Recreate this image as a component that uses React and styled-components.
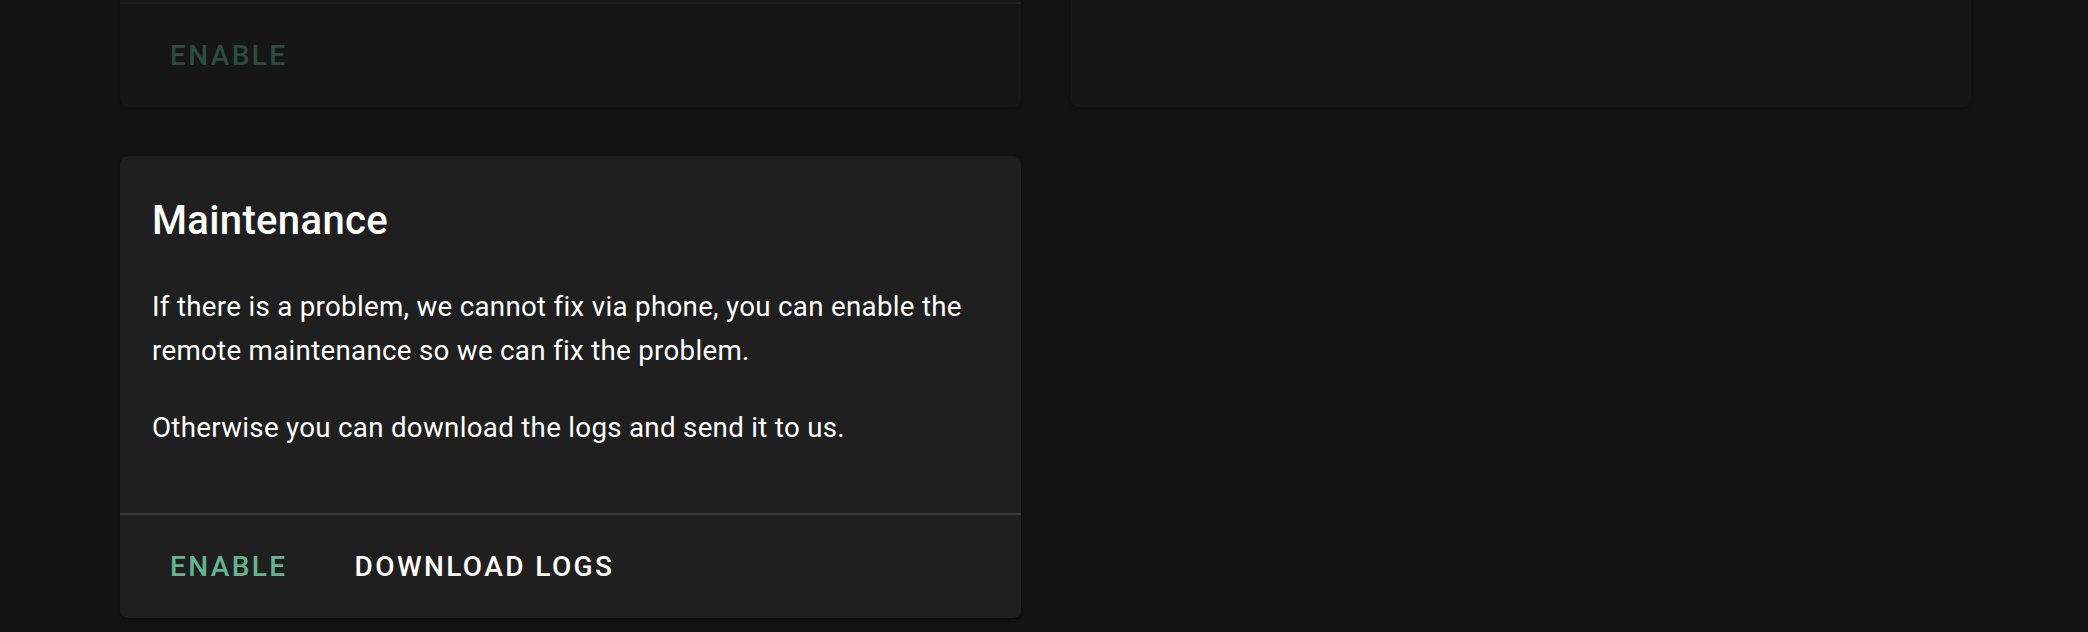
import React from 'react'
import styled, { createGlobalStyle } from 'styled-components'

const GlobalStyle = createGlobalStyle`
  html, body {
    margin: 0;
    padding: 0;
    background: #121212;
    overflow: hidden;
  }

  body {
    font-family: Roboto, "Liberation Sans", sans-serif;
    color: #fff;
  }
`

const colours = {
  page: '#121212',
  paper: '#1f1f1f',
  divider: '#3a3a3a',
  primary: '#63b592',
  text: '#ffffff',
}

const Page = styled.div`
  padding: 0 117px 0 120px;
  height: 632px;
  overflow: hidden;
`

const Row = styled.div`
  display: grid;
  grid-template-columns: 901px 900px;
  column-gap: 50px;
  margin-top: ${props => props.offset || 0}px;
  margin-bottom: 49px;
`

const Card = styled.section`
  display: flex;
  flex-direction: column;
  background: ${colours.paper};
  border-radius: 8px;
  box-shadow: 0 2px 3px rgba(0, 0, 0, 0.35);
  opacity: ${props => (props.dimmed ? 0.35 : 1)};
  overflow: hidden;
`

// stands in for the card body scrolled out of view
const Hidden = styled.div`
  height: ${props => props.height}px;
`

const Content = styled.div`
  padding: 33px 32px 32px;
`

const Title = styled.h2`
  margin: 8px 0 40px;
  font-size: 40px;
  line-height: 48px;
  font-weight: 500;
  letter-spacing: 0.35px;
`

const Copy = styled.p`
  margin: 0 0 33px;
  font-size: 27.7px;
  line-height: 44px;
  font-weight: 400;
  letter-spacing: 0.3px;
  color: ${colours.text};

  &:last-child {
    margin-bottom: 31px;
  }
`

const Actions = styled.div`
  display: flex;
  align-items: center;
  gap: 31px;
  padding: 15px 32px;
  border-top: 2px solid ${colours.divider};
`

const Button = styled.button`
  border: 0;
  background: none;
  padding: 12px 18px;
  font-family: Roboto, "Liberation Sans", sans-serif;
  font-size: 28px;
  line-height: 49px;
  font-weight: 500;
  letter-spacing: 2.4px;
  text-transform: uppercase;
  color: ${props => (props.primary ? colours.primary : colours.text)};
  cursor: pointer;
`

export default function App() {
  return (
    <>
      <GlobalStyle />
      <Page>
        <Row offset={-56}>
          <Card dimmed>
            <Hidden height={58} />
            <Actions>
              <Button primary>Enable</Button>
            </Actions>
          </Card>
          <Card dimmed />
        </Row>
        <Row>
          <Card>
            <Content>
              <Title>Maintenance</Title>
              <Copy>
                If there is a problem, we cannot fix via phone, you can enable the
                remote maintenance so we can fix the problem.
              </Copy>
              <Copy>Otherwise you can download the logs and send it to us.</Copy>
            </Content>
            <Actions>
              <Button primary>Enable</Button>
              <Button>Download logs</Button>
            </Actions>
          </Card>
        </Row>
      </Page>
    </>
  )
}
